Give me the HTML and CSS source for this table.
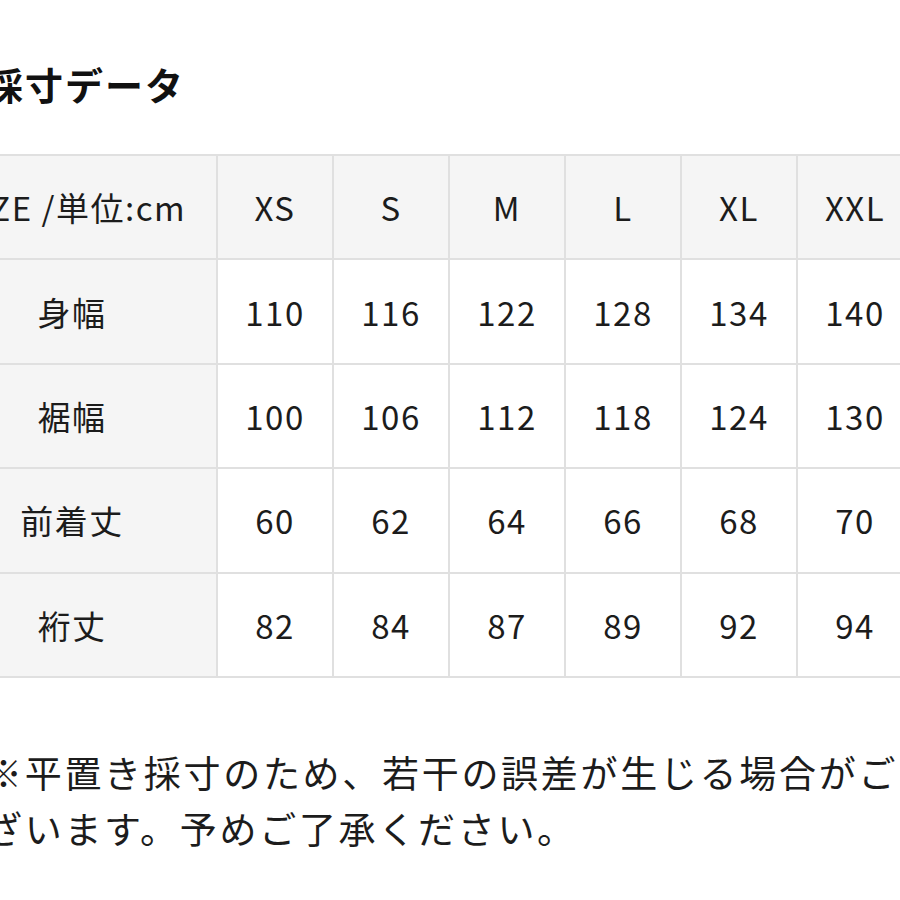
FILE: index.html
```html
<!DOCTYPE html>
<html lang="ja">
<head>
<meta charset="utf-8">
<title>採寸データ</title>
<link rel="stylesheet" href="styles.css">
</head>
<body>
<div class="page">
  <h2 class="title">採寸データ</h2>
  <table class="size">
    <colgroup>
      <col class="c-label">
      <col class="c-size"><col class="c-size"><col class="c-size">
      <col class="c-size"><col class="c-size"><col class="c-size">
    </colgroup>
    <thead>
      <tr><th>SIZE /単位:cm</th><th>XS</th><th>S</th><th>M</th><th>L</th><th>XL</th><th>XXL</th></tr>
    </thead>
    <tbody>
      <tr><th>身幅</th><td>110</td><td>116</td><td>122</td><td>128</td><td>134</td><td>140</td></tr>
      <tr><th>裾幅</th><td>100</td><td>106</td><td>112</td><td>118</td><td>124</td><td>130</td></tr>
      <tr><th>前着丈</th><td>60</td><td>62</td><td>64</td><td>66</td><td>68</td><td>70</td></tr>
      <tr><th>裄丈</th><td>82</td><td>84</td><td>87</td><td>89</td><td>92</td><td>94</td></tr>
    </tbody>
  </table>
  <p class="note">※平置き採寸のため、若干の誤差が生じる場合がございます。予めご了承ください。</p>
</div>
</body>
</html>
```

FILE: styles.css
```css
html, body {
  margin: 0;
  padding: 0;
  overflow: hidden;
  background: #ffffff;
}

body {
  width: 900px;
  height: 900px;
  font-family: "Noto Sans CJK JP", "Noto Sans", sans-serif;
  color: #1c1c1c;
}

.page {
  margin-left: -15px;
  width: 930px;
}

.title {
  margin: 60px 0 0 0;
  font-size: 38px;
  line-height: 48px;
  letter-spacing: 2px;
  font-weight: 700;
  color: #111111;
}

.size {
  margin: 46px 0 0 -59px;
  width: 986px;
  table-layout: fixed;
  border-collapse: collapse;
}

.c-label { width: 290px; }
.c-size { width: 116px; }

.size th,
.size td {
  border: 2px solid #e0e0e0;
  height: 102.4px;
  padding: 0;
  text-align: center;
  vertical-align: middle;
  font-size: 33px;
  font-weight: 400;
  line-height: 40px;
  letter-spacing: 1.5px;
}

.size thead th,
.size tbody th {
  background: #f5f5f5;
}

.size td {
  background: #ffffff;
}

.note {
  margin: 66px 0 0 0;
  font-size: 37px;
  line-height: 56px;
  letter-spacing: 2.7px;
  color: #1c1c1c;
}
```
